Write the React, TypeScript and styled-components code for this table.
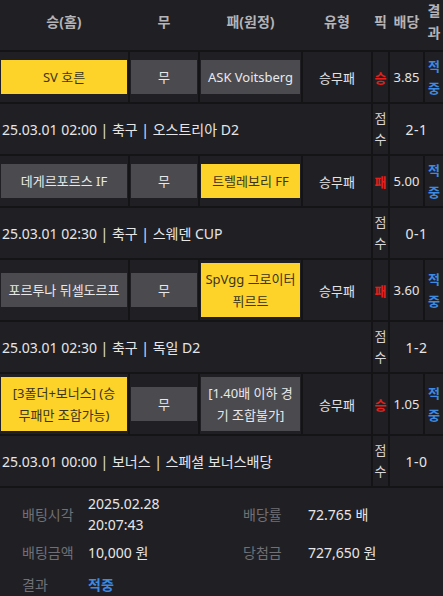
import React from "react";
import styled, { createGlobalStyle } from "styled-components";

const Global = createGlobalStyle`
  html, body { margin: 0; padding: 0; background: #202024; }
  body { font-family: "Noto Sans", "Noto Sans CJK KR", sans-serif; color: #e4e4e4; }
  * { box-sizing: border-box; }
`;

const COLS = "128px 68px 101px 68px 15px 33px 18px";

const Page = styled.div`
  width: 443px;
  height: 596px;
  overflow: hidden;
  background: #202024;
`;

const Header = styled.div`
  display: grid;
  grid-template-columns: ${COLS};
  column-gap: 2px;
  height: 52px;
  padding-bottom: 8px;
  border-bottom: 2px solid #141416;
`;

const HeadCell = styled.div`
  display: flex;
  align-items: center;
  justify-content: center;
  text-align: center;
  font-size: 14px;
  font-weight: 700;
  color: #b4b4b8;
  line-height: 22px;
  white-space: nowrap;
`;

const Stack = styled.span<{ $lh?: number }>`
  display: flex;
  flex-direction: column;
  align-items: center;
  line-height: ${(p) => p.$lh ?? 22}px;
`;

const Table = styled.div`
  display: grid;
  grid-template-columns: ${COLS};
  gap: 2px;
  background: #141416;
  padding-bottom: 2px;
`;

const Cell = styled.div<{ $span?: number }>`
  background: #202024;
  display: flex;
  align-items: center;
  justify-content: center;
  min-height: 50px;
  padding: 3px 1px;
  font-size: 13px;
  color: #e4e4e4;
  ${(p) => (p.$span ? `grid-column: span ${p.$span};` : "")}
`;

const TeamBox = styled.div<{ $on?: boolean; $pad?: number }>`
  flex: 1;
  min-height: 34px;
  padding: 5px ${(p) => p.$pad ?? 3}px;
  display: flex;
  align-items: center;
  justify-content: center;
  text-align: center;
  font-size: 13px;
  line-height: 22px;
  background: ${(p) => (p.$on ? "#fdd329" : "#4a4a4f")};
  color: ${(p) => (p.$on ? "#3b3520" : "#e8e8ea")};
`;

const PlainCell = styled(Cell)`
  padding: 3px 0;
`;

const PickText = styled.span`
  color: #e3201b;
  font-weight: 700;
  font-size: 13px;
`;

const Result = styled(Stack)`
  color: #3d8ae2;
  font-weight: 700;
  font-size: 13px;
`;

const InfoCell = styled(Cell)`
  justify-content: flex-start;
  padding-left: 2px;
  font-size: 14px;
  color: #e6e6e8;
`;

const ScoreLabel = styled(Stack)`
  font-size: 13px;
  color: #d8d8da;
`;

const Score = styled.span`
  font-size: 14px;
  color: #e6e6e8;
  letter-spacing: 0.5px;
`;

const Summary = styled.div`
  display: grid;
  grid-template-columns: 66px 155px 65px 1fr;
  grid-template-rows: 46px 30px 34px;
  align-items: center;
  padding: 3px 0 0 22px;
  font-size: 14px;
`;

const Label = styled.div`
  color: #707076;
`;

const Value = styled.div<{ $blue?: boolean }>`
  color: ${(p) => (p.$blue ? "#3d8ae2" : "#e6e6e8")};
  font-weight: ${(p) => (p.$blue ? 700 : 400)};
  line-height: 21px;
`;

type Game = {
  home: string;
  away: string;
  pick: string;
  odds: string;
  sel: "home" | "away";
  info: string;
  score: string;
};

const games: Game[] = [
  { home: "SV 호른", away: "ASK Voitsberg", pick: "승", odds: "3.85", sel: "home", info: "25.03.01 02:00 | 축구 | 오스트리아 D2", score: "2-1" },
  { home: "데게르포르스 IF", away: "트렐레보리 FF", pick: "패", odds: "5.00", sel: "away", info: "25.03.01 02:30 | 축구 | 스웨덴 CUP", score: "0-1" },
  { home: "포르투나 뒤셀도르프", away: "SpVgg 그로이터 퓌르트", pick: "패", odds: "3.60", sel: "away", info: "25.03.01 02:30 | 축구 | 독일 D2", score: "1-2" },
  { home: "[3폴더+보너스] (승무패만 조합가능)", away: "[1.40배 이하 경기 조합불가]", pick: "승", odds: "1.05", sel: "home", info: "25.03.01 00:00 | 보너스 | 스페셜 보너스배당", score: "1-0" },
];

export default function App() {
  return (
    <Page>
      <Global />
      <Header>
        <HeadCell>승(홈)</HeadCell>
        <HeadCell>무</HeadCell>
        <HeadCell>패(원정)</HeadCell>
        <HeadCell>유형</HeadCell>
        <HeadCell>픽</HeadCell>
        <HeadCell>배당</HeadCell>
        <HeadCell>
          <Stack>
            <span>결</span>
            <span>과</span>
          </Stack>
        </HeadCell>
      </Header>
      <Table>
        {games.map((g, i) => (
          <React.Fragment key={i}>
            <Cell>
              <TeamBox $on={g.sel === "home"} $pad={6}>
                {g.home}
              </TeamBox>
            </Cell>
            <Cell>
              <TeamBox>무</TeamBox>
            </Cell>
            <Cell>
              <TeamBox $on={g.sel === "away"}>{g.away}</TeamBox>
            </Cell>
            <PlainCell>승무패</PlainCell>
            <PlainCell>
              <PickText>{g.pick}</PickText>
            </PlainCell>
            <PlainCell>{g.odds}</PlainCell>
            <PlainCell>
              <Result>
                <span>적</span>
                <span>중</span>
              </Result>
            </PlainCell>
            <InfoCell $span={4}>{g.info}</InfoCell>
            <PlainCell>
              <ScoreLabel $lh={21}>
                <span>점</span>
                <span>수</span>
              </ScoreLabel>
            </PlainCell>
            <PlainCell $span={2}>
              <Score>{g.score}</Score>
            </PlainCell>
          </React.Fragment>
        ))}
      </Table>
      <Summary>
        <Label>배팅시각</Label>
        <Value>
          2025.02.28
          <br />
          20:07:43
        </Value>
        <Label>배당률</Label>
        <Value>72.765 배</Value>
        <Label>배팅금액</Label>
        <Value>10,000 원</Value>
        <Label>당첨금</Label>
        <Value>727,650 원</Value>
        <Label>결과</Label>
        <Value $blue>적중</Value>
      </Summary>
    </Page>
  );
}
